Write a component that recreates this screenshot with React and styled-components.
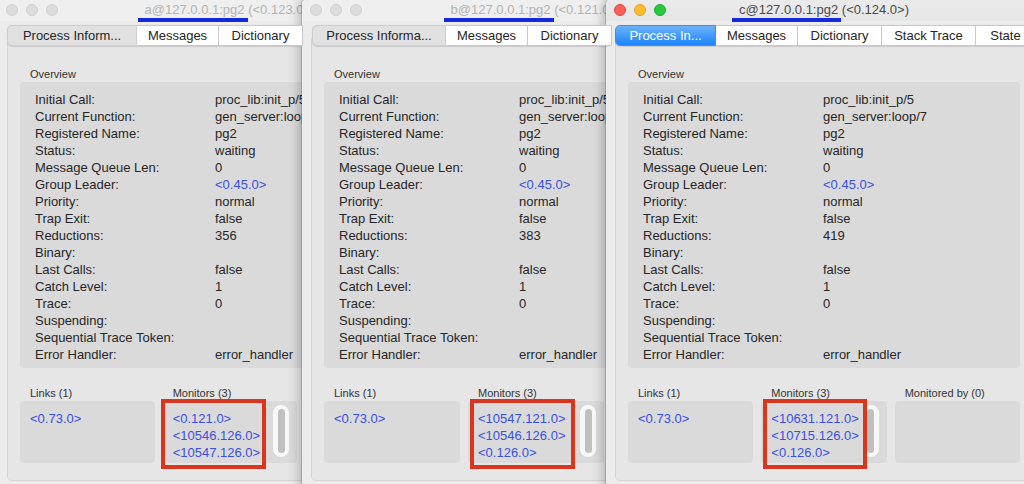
import React from 'react';
import styled, { createGlobalStyle, css } from 'styled-components';

const GlobalStyle = createGlobalStyle`
  html, body { margin: 0; padding: 0; }
  body {
    width: 1024px;
    height: 484px;
    overflow: hidden;
    background: #d8d8d8;
    font-family: "Liberation Sans", Arial, Helvetica, sans-serif;
    -webkit-font-smoothing: antialiased;
  }
`;

const Desktop = styled.div`
  position: relative;
  width: 1024px;
  height: 484px;
  overflow: hidden;
`;

const Win = styled.section`
  position: absolute;
  top: -1px;
  left: ${p => p.$left}px;
  width: ${p => p.$width}px;
  height: 492px;
  display: flex;
  flex-direction: column;
  background: #ececec;
  border-radius: 5px 5px 0 0;
  box-shadow: 0 0 0 1px rgba(0, 0, 0, 0.14), -2px 0 12px rgba(0, 0, 0, 0.28);
  overflow: hidden;
`;

const TitleBar = styled.header`
  height: 22px;
  flex: 0 0 22px;
  display: grid;
  grid-template-columns: 1fr auto 1fr;
  align-items: center;
  padding: 0 8px;
  background: ${p => (p.$active ? 'linear-gradient(#ebebeb, #e6e6e6)' : '#efefef')};
`;

const Lights = styled.div`
  display: flex;
  gap: 8px;
  align-items: center;
`;

const lightColors = {
  close: ['#fd5f57', '#e2463f'],
  min: ['#febc2e', '#e0a126'],
  max: ['#29c841', '#1dac2c'],
};

const Light = styled.span`
  width: 12px;
  height: 12px;
  box-sizing: border-box;
  border-radius: 50%;
  ${p =>
    p.$active
      ? css`
          background: ${lightColors[p.$kind][0]};
          border: 1px solid ${lightColors[p.$kind][1]};
        `
      : css`
          background: #dcdcdc;
          border: 1px solid #d0d0d0;
        `}
`;

const Title = styled.div`
  font-size: 13px;
  line-height: 16px;
  white-space: nowrap;
  color: ${p => (p.$active ? '#4a4a4a' : '#b4b4b4')};
`;

const Marked = styled.span`
  position: relative;
  &::after {
    content: '';
    position: absolute;
    left: -7px;
    right: -3px;
    bottom: -5px;
    height: 4px;
    background: #1428dc;
  }
`;

const TabBar = styled.nav`
  position: relative;
  z-index: 1;
  display: flex;
  align-self: flex-start;
  margin: 4px 0 0 ${p => p.$inset}px;
  height: 21px;
  border-radius: 5px;
  box-shadow: 0 0.5px 1px rgba(0, 0, 0, 0.12);
`;

const Tab = styled.div`
  flex: 0 0 ${p => p.$w}px;
  box-sizing: border-box;
  height: 21px;
  padding: 0 6px;
  border: 1px solid #c9c9c9;
  border-left-width: 0;
  background: #ffffff;
  color: #262626;
  font-size: 13px;
  line-height: 19px;
  text-align: center;
  white-space: nowrap;
  overflow: hidden;
  &:first-child {
    border-left-width: 1px;
    border-radius: 5px 0 0 5px;
  }
  ${p =>
    p.$selected &&
    (p.$active
      ? css`
          background: linear-gradient(#6cb2fb, #1d84fb);
          border-color: #3f8ff0;
          color: #ffffff;
        `
      : css`
          background: #e1e1e1;
          border-color: #cdcdcd;
          color: #262626;
        `)}
`;

const Panel = styled.main`
  margin: -11px 9px 0;
  border: 1px solid #d4d4d4;
  border-radius: 5px;
  background: #e6e6e6;
  padding: 32px 12px 17px;
  display: flex;
  flex-direction: column;
`;

const GroupLabel = styled.div`
  font-size: 11px;
  line-height: 13px;
  padding-left: 10px;
  color: #333333;
  white-space: nowrap;
`;

const OverviewBox = styled.div`
  margin-top: 1px;
  background: #dadada;
  border-radius: 4px;
  padding: 9px 0 5px 15px;
  display: grid;
  grid-template-columns: 180px 1fr;
  font-size: 13px;
  line-height: 17px;
  color: #262626;
  white-space: nowrap;
`;

const Value = styled.span`
  color: ${p => (p.$link ? '#3a4fe2' : '#262626')};
`;

const Bottom = styled.div`
  margin-top: 19px;
  display: grid;
  grid-template-columns: repeat(3, 1fr);
  gap: 8px;
`;

const ListBox = styled.div`
  position: relative;
  margin-top: ${p => (p.$unlabelled ? 14 : 1)}px;
  height: 62px;
  box-sizing: border-box;
  background: #dadada;
  border-radius: 4px;
  padding: 4px 8px 4px 10px;
  display: flex;
  align-items: flex-start;
`;

const Items = styled.div`
  flex: 1 1 auto;
  min-width: 0;
  padding-top: 5px;
  font-size: 13px;
  line-height: 17px;
  color: #3a4fe2;
  white-space: nowrap;
`;

const ScrollTrack = styled.div`
  flex: 0 0 16px;
  height: 52px;
  box-sizing: border-box;
  padding: 4px 0;
  background: #f8f8f8;
  border-radius: 8px;
  display: flex;
  justify-content: center;
`;

const ScrollThumb = styled.div`
  width: 7px;
  background: #c0c0c0;
  border-radius: 4px;
`;

const Annotation = styled.div`
  position: absolute;
  top: -2px;
  left: ${p => p.$x}px;
  width: ${p => p.$w}px;
  height: 70px;
  box-sizing: border-box;
  border: 4px solid #d8361f;
  pointer-events: none;
  z-index: 2;
`;

const labels = [
  'Initial Call:',
  'Current Function:',
  'Registered Name:',
  'Status:',
  'Message Queue Len:',
  'Group Leader:',
  'Priority:',
  'Trap Exit:',
  'Reductions:',
  'Binary:',
  'Last Calls:',
  'Catch Level:',
  'Trace:',
  'Suspending:',
  'Sequential Trace Token:',
  'Error Handler:',
];

const valuesFor = reductions => [
  'proc_lib:init_p/5',
  'gen_server:loop/7',
  'pg2',
  'waiting',
  '0',
  '<0.45.0>',
  'normal',
  'false',
  reductions,
  '',
  'false',
  '1',
  '0',
  '',
  '',
  'error_handler',
];

const windows = [
  {
    id: 'a',
    left: -2,
    width: 464,
    inset: 9,
    active: false,
    covered: true,
    pid: '<0.123.0>',
    tabs: [
      ['Process Inform...', 130],
      ['Messages', 82],
      ['Dictionary', 84],
    ],
    reductions: '356',
    monitors: ['<0.121.0>', '<10546.126.0>', '<10547.126.0>'],
    mark: { x: -2, w: 105 },
  },
  {
    id: 'b',
    left: 302,
    width: 468,
    inset: 10,
    active: false,
    covered: true,
    pid: '<0.121.0>',
    tabs: [
      ['Process Informa...', 134],
      ['Messages', 82],
      ['Dictionary', 84],
    ],
    reductions: '383',
    monitors: ['<10547.121.0>', '<10546.126.0>', '<0.126.0>'],
    mark: { x: 2, w: 105 },
  },
  {
    id: 'c',
    left: 606,
    width: 436,
    inset: 9,
    active: true,
    covered: false,
    pid: '<0.124.0>',
    tabs: [
      ['Process In...', 101],
      ['Messages', 82],
      ['Dictionary', 84],
      ['Stack Trace', 94],
      ['State', 60],
    ],
    reductions: '419',
    monitors: ['<10631.121.0>', '<10715.126.0>', '<0.126.0>'],
    mark: { x: 2, w: 104 },
  },
];

function ProcessWindow({ w }) {
  const values = valuesFor(w.reductions);
  return (
    <Win $left={w.left} $width={w.width}>
      <TitleBar $active={w.active}>
        <Lights>
          <Light $kind="close" $active={w.active} />
          <Light $kind="min" $active={w.active} />
          <Light $kind="max" $active={w.active} />
        </Lights>
        <Title $active={w.active}>
          <Marked>{w.id}@127.0.0.1:pg2</Marked> ({w.pid})
        </Title>
        <span />
      </TitleBar>
      <TabBar $inset={w.inset}>
        {w.tabs.map(([t, width], i) => (
          <Tab key={t} $w={width} $selected={i === 0} $active={w.active}>
            {t}
          </Tab>
        ))}
      </TabBar>
      <Panel>
        <GroupLabel>Overview</GroupLabel>
        <OverviewBox>
          {labels.map((l, i) => (
            <React.Fragment key={l}>
              <span>{l}</span>
              <Value $link={i === 5}>{values[i]}</Value>
            </React.Fragment>
          ))}
        </OverviewBox>
        <Bottom>
          <div>
            <GroupLabel>Links (1)</GroupLabel>
            <ListBox>
              <Items>&lt;0.73.0&gt;</Items>
            </ListBox>
          </div>
          <div>
            <GroupLabel>Monitors (3)</GroupLabel>
            <ListBox>
              <Items>
                {w.monitors.map(m => (
                  <div key={m}>{m}</div>
                ))}
              </Items>
              <ScrollTrack>
                <ScrollThumb />
              </ScrollTrack>
              <Annotation $x={w.mark.x} $w={w.mark.w} />
            </ListBox>
          </div>
          <div>
            {!w.covered && <GroupLabel>Monitored by (0)</GroupLabel>}
            <ListBox $unlabelled={w.covered} />
          </div>
        </Bottom>
      </Panel>
    </Win>
  );
}

export default function App() {
  return (
    <>
      <GlobalStyle />
      <Desktop>
        {windows.map(w => (
          <ProcessWindow key={w.id} w={w} />
        ))}
      </Desktop>
    </>
  );
}
